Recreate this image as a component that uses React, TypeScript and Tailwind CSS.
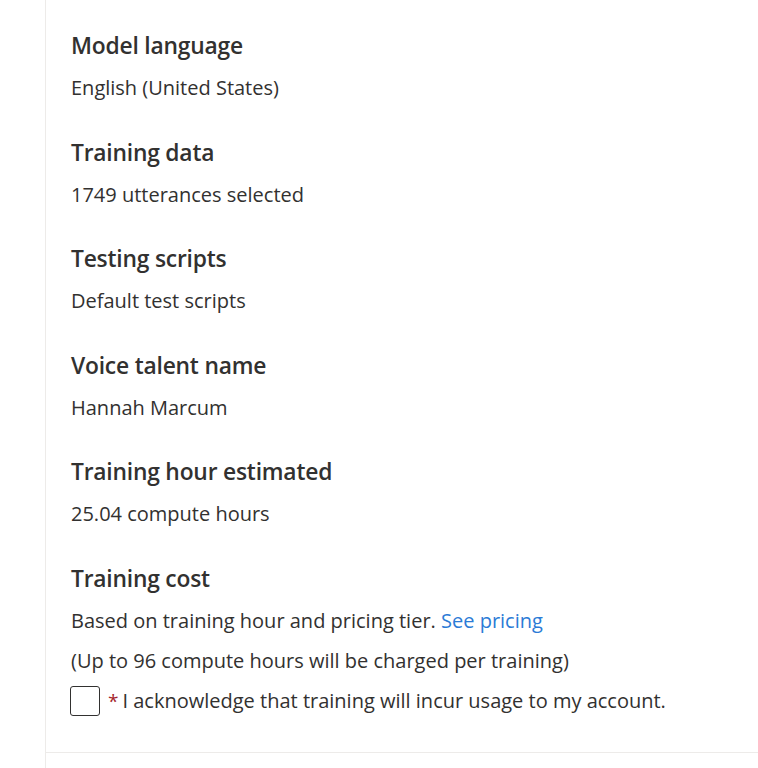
const sections = [
  { title: "Model language", value: "English (United States)" },
  { title: "Training data", value: "1749 utterances selected" },
  { title: "Testing scripts", value: "Default test scripts" },
  { title: "Voice talent name", value: "Hannah Marcum" },
  { title: "Training hour estimated", value: "25.04 compute hours" },
];

export default function App() {
  return (
    <div className="h-[768px] w-[758px] overflow-hidden bg-white pl-[45px] font-['Open_Sans',sans-serif] text-[#323130]">
      <div className="h-full border-l border-[#edebe9]">
        <div className="border-b border-[#edebe9] pb-[31px] pl-[25px] pt-[32px]">
          <div className="flex flex-col gap-[30.6px]">
            {sections.map((s) => (
              <section key={s.title}>
                <h2 className="text-[22.8px] font-semibold leading-[28px] tracking-[-0.2px]">{s.title}</h2>
                <p className="mt-[8px] text-[20px] leading-[40px]">{s.value}</p>
              </section>
            ))}

            <section>
              <h2 className="text-[22.8px] font-semibold leading-[28px] tracking-[-0.2px]">Training cost</h2>
              <p className="mt-[8px] text-[20px] leading-[40px]">
                Based on training hour and pricing tier.{" "}
                <a href="#" className="text-[#2b7bd6]">
                  See pricing
                </a>
              </p>
              <p className="text-[20px] leading-[40px]">
                (Up to 96 compute hours will be charged per training)
              </p>
              <label className="-ml-[1px] flex h-[40px] items-center">
                <span className="h-[30px] w-[30px] shrink-0 rounded-[3px] border border-[#323130] bg-white" />
                <span className="ml-[8px] text-[19px] text-[#a4262c]">*</span>
                <span className="ml-[4px] text-[20px] leading-[40px]">
                  I acknowledge that training will incur usage to my account.
                </span>
              </label>
            </section>
          </div>
        </div>
      </div>
    </div>
  );
}
